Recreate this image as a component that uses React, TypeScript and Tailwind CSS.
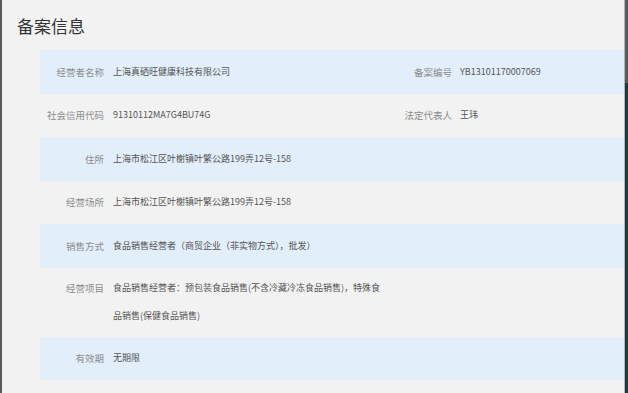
// Filing record sheet: a grey panel with alternating pale-blue rows of
// label / value pairs, framed by a dark window edge on both sides.

type Pair = { label: string; value: string[] };

interface Row {
  left: Pair;
  right?: Pair;
  tinted: boolean;
}

const rows: Row[] = [
  {
    left: { label: "经营者名称", value: ["上海真硒旺健康科技有限公司"] },
    right: { label: "备案编号", value: ["YB13101170007069"] },
    tinted: true,
  },
  {
    left: { label: "社会信用代码", value: ["91310112MA7G4BU74G"] },
    right: { label: "法定代表人", value: ["王玮"] },
    tinted: false,
  },
  { left: { label: "住所", value: ["上海市松江区叶榭镇叶繁公路199弄12号-158"] }, tinted: true },
  { left: { label: "经营场所", value: ["上海市松江区叶榭镇叶繁公路199弄12号-158"] }, tinted: false },
  { left: { label: "销售方式", value: ["食品销售经营者（商贸企业（非实物方式），批发）"] }, tinted: true },
  {
    // the source wraps this one after 特殊食
    left: {
      label: "经营项目",
      value: ["食品销售经营者：预包装食品销售(不含冷藏冷冻食品销售)，特殊食", "品销售(保健食品销售)"],
    },
    tinted: false,
  },
  { left: { label: "有效期", value: ["无期限"] }, tinted: true },
];

const font = { fontFamily: '"Noto Sans CJK SC", "Liberation Sans", sans-serif' };

function Value({ lines }: { lines: string[] }) {
  return (
    <span className="flex flex-col whitespace-nowrap text-[9px] text-[#555]">
      {lines.map((line) => (
        <span key={line}>{line}</span>
      ))}
    </span>
  );
}

function RecordRow({ row }: { row: Row }) {
  const tall = row.left.value.length > 1;
  return (
    <div
      className={`flex leading-[28px] ${tall ? "h-[69px] items-start pt-[6px]" : "h-[43.5px] items-center"} ${
        row.tinted ? "bg-[#e2eefa]" : ""
      }`}
    >
      <div className="flex w-[340px] shrink-0 items-start gap-[9px]">
        <span className="w-[64px] shrink-0 text-right text-[9.5px] text-[#8c8c8c]">{row.left.label}</span>
        <Value lines={row.left.value} />
      </div>
      {row.right && (
        <div className="flex items-start gap-[8px]">
          <span className="w-[72px] shrink-0 text-right text-[9.5px] text-[#8c8c8c]">{row.right.label}</span>
          <Value lines={row.right.value} />
        </div>
      )}
    </div>
  );
}

export default function App() {
  return (
    <div className="flex h-[393px] w-[628px] overflow-hidden" style={font}>
      {/* dark window edge */}
      <div className="w-[2px] shrink-0 bg-[#5a5a5a]" />

      <div className="flex flex-1 flex-col bg-[#f2f2f2]">
        <div className="flex h-[50px] shrink-0 items-center pl-[15px]">
          <h1 className="text-[17px] leading-none text-[#333]">备案信息</h1>
        </div>
        <div className="ml-[38px] flex flex-col">
          {rows.map((row) => (
            <RecordRow key={row.left.label} row={row} />
          ))}
        </div>
      </div>

      {/* right edge: hairline, then the backdrop behind the dialog */}
      <div className="w-[1px] shrink-0 bg-[#b5b5b5]" />
      <div className="flex w-[3px] shrink-0 flex-col">
        <div className="h-[83px] bg-[#555a5a]" />
        <div className="flex-1 bg-[#1f3a3c]" />
      </div>
    </div>
  );
}
